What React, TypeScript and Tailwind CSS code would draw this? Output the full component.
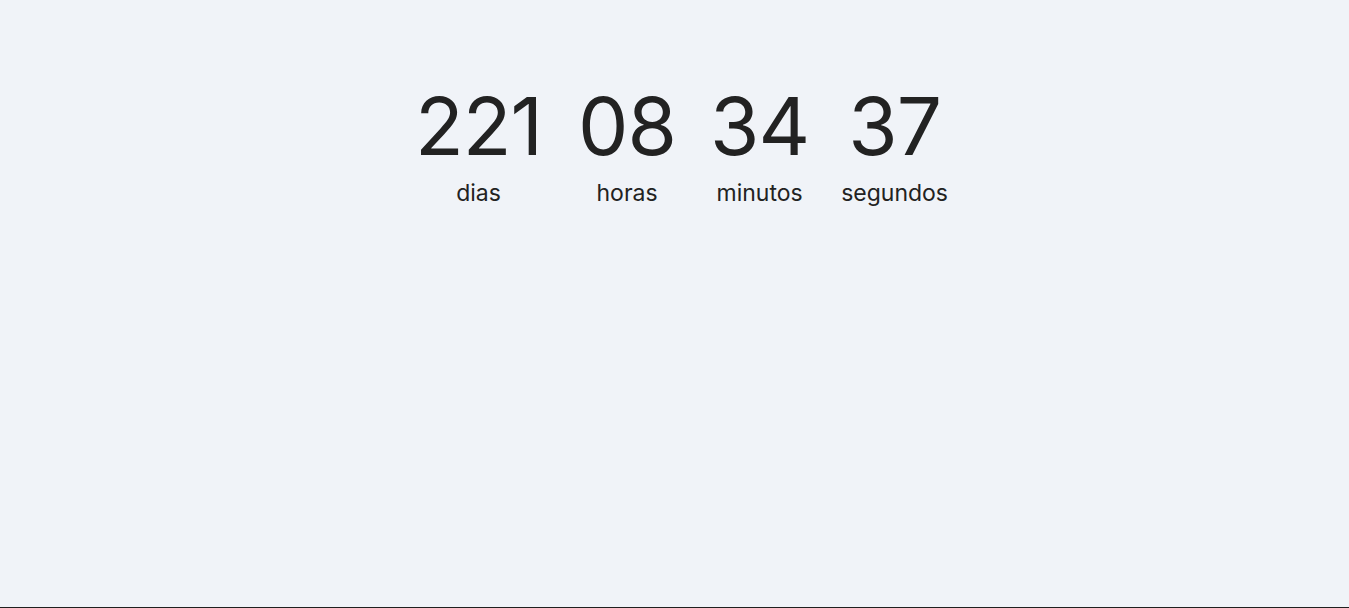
const units = [
  { value: "221", label: "dias", gap: "ml-0" },
  { value: "08", label: "horas", gap: "ml-[36px]" },
  { value: "34", label: "minutos", gap: "ml-[34px]" },
  { value: "37", label: "segundos", gap: "ml-[32px]" },
];

export default function App() {
  return (
    <div className="min-h-[608px] h-[608px] bg-[#f0f3f8] border-b border-[#1f1f1f] font-['Inter',sans-serif] text-[#222222]">
      <div className="flex justify-center pl-[14px] pt-[78px]">
        {units.map((u) => (
          <div key={u.label} className={`flex flex-col items-center ${u.gap}`}>
            <span className="text-[80px] leading-[96px] tracking-[-1px]">{u.value}</span>
            <span className="text-[23px] leading-[30px] mt-[4px]">{u.label}</span>
          </div>
        ))}
      </div>
    </div>
  );
}
